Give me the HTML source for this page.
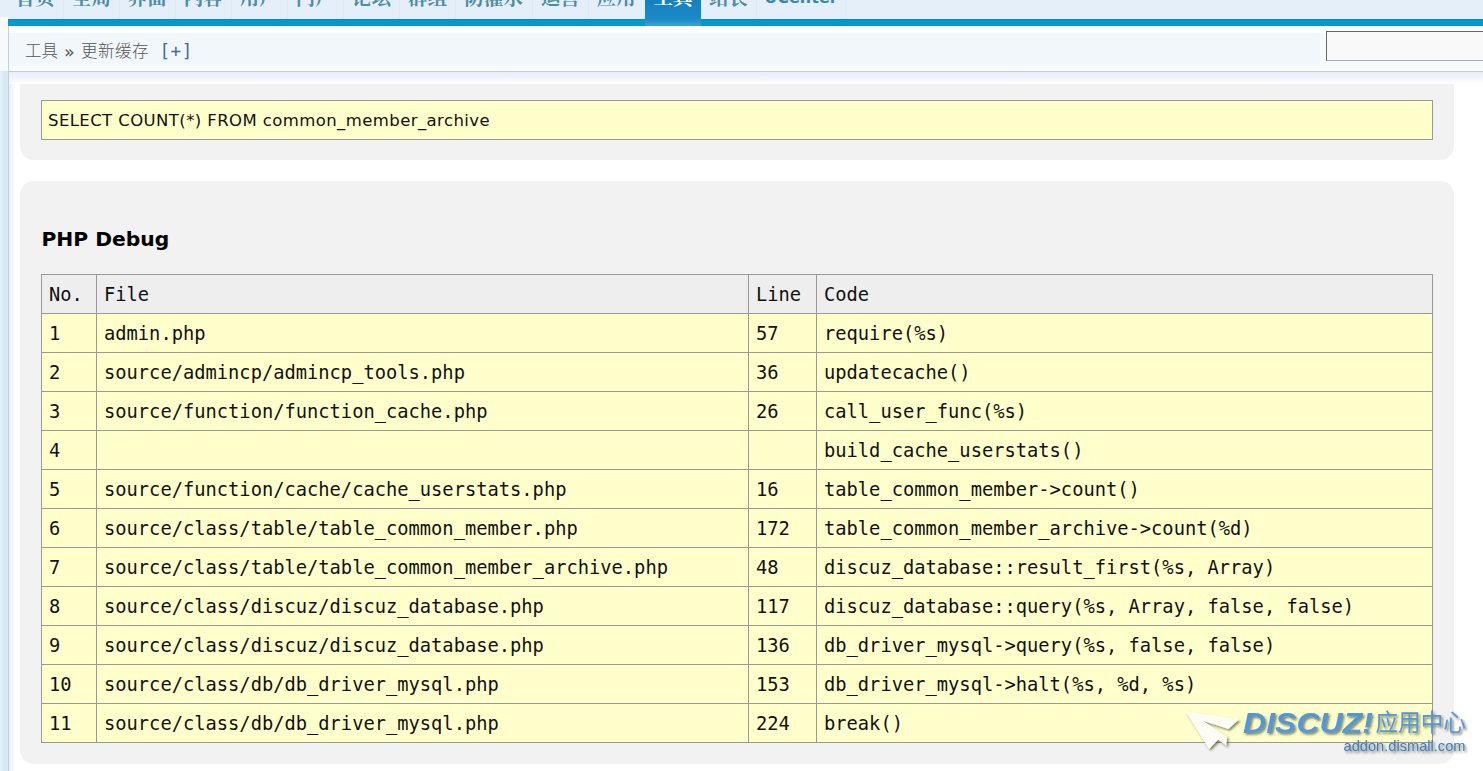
<!DOCTYPE html>
<html lang="zh-CN">
<head>
<meta charset="utf-8">
<title>Discuz! 管理中心 - 工具 - 更新缓存</title>
<style>
html,body{margin:0;padding:0;}
body{width:1483px;height:771px;overflow:hidden;position:relative;background:#fff;font-family:"Liberation Sans","Noto Sans CJK SC",sans-serif;color:#000;}
.abs{position:absolute;}
/* top nav strip */
#topnav{left:0;top:0;width:1483px;height:19px;background:#e5effa;overflow:hidden;box-shadow:inset 0 -1px 0 #d4f1f8;}
#topnav ul{list-style:none;margin:0;padding:0;position:absolute;left:7.6px;top:-13px;width:1400px;height:40px;white-space:nowrap;}
#topnav li{float:left;height:35px;line-height:22px;font-weight:bold;color:#4f8ca2;font-size:19.5px;text-align:center;border-right:1px solid #dde9f5;box-sizing:border-box;font-family:"Liberation Sans","Noto Serif CJK SC",serif;}
#topnav li.w2{width:56.06px;}
#topnav li.w3{width:76.8px;}
#topnav li.uc{width:89px;font-family:"DejaVu Sans",sans-serif;font-size:16px;color:#3d87a6;line-height:21px;}
#topnav li.on{background:linear-gradient(#1481bf 13px,#1a8bc6 32px);color:#fff;border-right:0;}
#bluebar{left:8px;top:19px;width:1475px;height:7px;background:#0398cf;border-top:1px solid #0e88ad;box-sizing:border-box;}
#ontab{left:645px;top:19px;width:56px;height:7px;background:linear-gradient(#1b8cc6,#3aa3d3);}
#leftcol{left:0;top:17px;width:8px;height:754px;background:#f6fafd;}
#leftcol2{left:0;top:71px;width:8px;height:700px;background:linear-gradient(90deg,#e4f0fb,#d3e6f6 60%,#d9e9f7);}
#vfade{left:9px;top:72px;width:7px;height:699px;background:linear-gradient(90deg,#e6f1fa,#ffffff);}
#vline{left:8px;top:26px;width:1px;height:745px;background:#c3ced8;}
/* breadcrumb bar */
#crumb{left:9px;top:26px;width:1474px;height:45px;background:linear-gradient(#ffffff 0,#ffffff 6.5px,#f2f7fb 7.5px,#f2f7fb 39px,#f8fbfd 40.5px,#fbfdfe 45px);border-bottom:1px solid #c6ccd5;}
#crumbfade{left:9px;top:72px;width:1474px;height:12px;background:linear-gradient(#e9eff9,#f1f5fb 50%,#ffffff);z-index:5;}
#crumbtxt{left:0;top:39px;width:300px;height:24px;font-size:16.5px;line-height:24px;color:#555;white-space:nowrap;font-family:"Liberation Sans","Noto Sans CJK SC",sans-serif;font-weight:300;}
#crumbtxt span{position:absolute;top:0;}
#crumbtxt .c1{left:25px;}
#crumbtxt .raq{left:64px;font-family:"DejaVu Sans",sans-serif;font-size:17.5px;top:0.5px;font-weight:normal;}
#crumbtxt .c2{left:81px;letter-spacing:0.5px;}
#crumbtxt .plus{left:159.4px;color:#3f6d9e;font-family:"DejaVu Sans Mono",monospace;font-size:17.6px;letter-spacing:0.6px;top:0;}
#search{left:1326px;top:31px;width:170px;height:30px;box-sizing:border-box;background:#f9f9f9;border:1px solid;border-color:#666 #aaa #aaa #666;}
#searchpad{left:1320px;top:33px;width:163px;height:34px;background:#f6fafd;}
/* debug boxes */
.box{background:#f2f2f2;border-radius:13.75px;}
#box1{left:20px;top:60px;width:1434px;height:100px;}
#box2{left:20px;top:181px;width:1434px;height:582.6px;}
#sql{left:41px;top:100px;width:1392px;height:40px;box-sizing:border-box;background:#ffffcc;border:1px solid #999;font-family:"DejaVu Sans",sans-serif;font-size:16.5px;letter-spacing:0.41px;line-height:38px;padding:1px 0 0 6px;color:#111;white-space:nowrap;}
#h2{left:41.5px;top:223px;font-family:"DejaVu Sans",sans-serif;font-weight:bold;font-size:20.3px;line-height:32px;color:#000;white-space:nowrap;}
table#dbg{left:41px;top:274px;width:1392px;border-collapse:collapse;table-layout:fixed;font-family:"DejaVu Sans Mono","Liberation Mono",monospace;font-size:18.74px;color:#111;}
#dbg td,#dbg th{border:1px solid #999;height:39px;padding:2px 0 0 7px;text-align:left;font-weight:normal;white-space:nowrap;overflow:hidden;line-height:36px;box-sizing:border-box;}
#dbg th{background:#eee;}
#dbg td{background:#ffffcc;}
</style>
</head>
<body>
<div id="topnav" class="abs">
<ul>
<li class="w2">首页</li><li class="w2">全局</li><li class="w2">界面</li><li class="w2">内容</li><li class="w2">用户</li><li class="w2">门户</li><li class="w2">论坛</li><li class="w2">群组</li><li class="w3">防灌水</li><li class="w2">运营</li><li class="w2">应用</li><li class="w2 on">工具</li><li class="w2">站长</li><li class="uc">UCenter</li>
</ul>
</div>
<div id="bluebar" class="abs"></div>
<div id="ontab" class="abs"></div>
<div id="leftcol" class="abs"></div>
<div id="leftcol2" class="abs"></div>
<div id="vline" class="abs"></div>
<div id="vfade" class="abs"></div>

<div id="box1" class="abs box"></div>
<div id="sql" class="abs">SELECT COUNT(*) FROM common_member_archive</div>
<div id="box2" class="abs box"></div>
<div id="h2" class="abs">PHP Debug</div>
<table id="dbg" class="abs">
<colgroup><col style="width:55px"><col style="width:652px"><col style="width:68px"><col></colgroup>
<tr><th>No.</th><th>File</th><th>Line</th><th>Code</th></tr>
<tr><td>1</td><td>admin.php</td><td>57</td><td>require(%s)</td></tr>
<tr><td>2</td><td>source/admincp/admincp_tools.php</td><td>36</td><td>updatecache()</td></tr>
<tr><td>3</td><td>source/function/function_cache.php</td><td>26</td><td>call_user_func(%s)</td></tr>
<tr><td>4</td><td></td><td></td><td>build_cache_userstats()</td></tr>
<tr><td>5</td><td>source/function/cache/cache_userstats.php</td><td>16</td><td>table_common_member-&gt;count()</td></tr>
<tr><td>6</td><td>source/class/table/table_common_member.php</td><td>172</td><td>table_common_member_archive-&gt;count(%d)</td></tr>
<tr><td>7</td><td>source/class/table/table_common_member_archive.php</td><td>48</td><td>discuz_database::result_first(%s, Array)</td></tr>
<tr><td>8</td><td>source/class/discuz/discuz_database.php</td><td>117</td><td>discuz_database::query(%s, Array, false, false)</td></tr>
<tr><td>9</td><td>source/class/discuz/discuz_database.php</td><td>136</td><td>db_driver_mysql-&gt;query(%s, false, false)</td></tr>
<tr><td>10</td><td>source/class/db/db_driver_mysql.php</td><td>153</td><td>db_driver_mysql-&gt;halt(%s, %d, %s)</td></tr>
<tr><td>11</td><td>source/class/db/db_driver_mysql.php</td><td>224</td><td>break()</td></tr>
</table>

<div id="crumb" class="abs"></div>
<div id="searchpad" class="abs"></div>
<div id="crumbfade" class="abs"></div>
<div id="crumbtxt" class="abs"><span class="c1">工具</span><span class="raq">»</span><span class="c2">更新缓存</span><span class="plus">[+]</span></div>
<div id="search" class="abs"></div>

<svg id="wm" class="abs" width="320" height="80" viewBox="1163 691 320 80" style="left:1163px;top:691px;z-index:20;overflow:visible">
<defs>
<filter id="sh" x="-10%" y="-20%" width="125%" height="150%"><feDropShadow dx="1.6" dy="1.8" stdDeviation="1.1" flood-color="#3a3a10" flood-opacity="0.62"/></filter>
<linearGradient id="dg" x1="0" y1="0" x2="0" y2="1"><stop offset="0" stop-color="#4f95d6"/><stop offset="1" stop-color="#5a9ad4"/></linearGradient>
</defs>
<g filter="url(#sh)">
<polygon fill="#fdfdf6" points="1185.4,711.3 1239.1,719.2 1228.5,728.9 1203.2,721.0 1227.1,736.7 1226.4,745.8 1218.3,739.4 1209.1,749.1"/>
</g>
<g filter="url(#sh)" fill="url(#dg)" font-family="'Liberation Sans','Noto Sans CJK SC',sans-serif">
<text x="1243" y="733" font-size="30" font-weight="bold" font-style="italic" textLength="130" lengthAdjust="spacingAndGlyphs">DISCUZ!</text>
<text x="1375.5" y="731" font-size="23.5" textLength="90.5" lengthAdjust="spacingAndGlyphs">应用中心</text>
<text x="1343.5" y="751" font-size="15" fill="#3f7cc0" textLength="122" lengthAdjust="spacingAndGlyphs">addon.dismall.com</text>
</g>
</svg>
</body>
</html>
